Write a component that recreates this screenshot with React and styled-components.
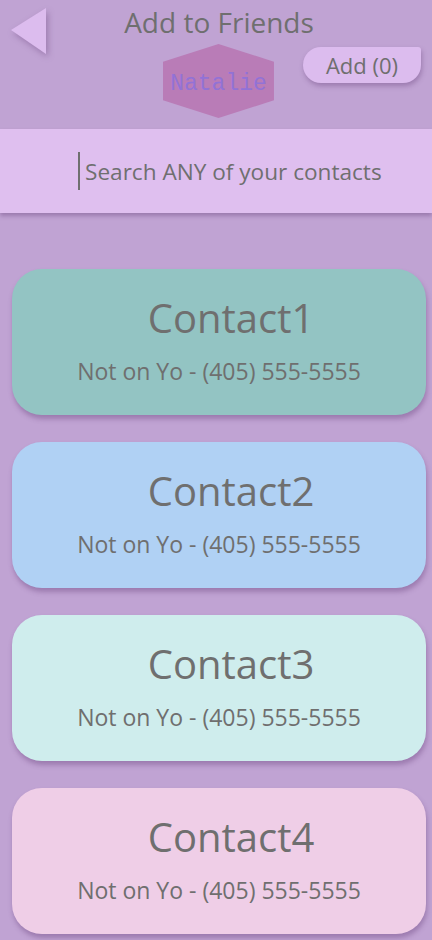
import styled, { createGlobalStyle } from "styled-components"

const GlobalStyle = createGlobalStyle`
    body {
        margin: 0;
        background: #c0a3d3;
        font-family: "Open Sans", "Noto Sans", sans-serif;
        color: #6f6f6f;
    }
`

const contacts = [
    { name: 'Contact1', color: '#93c4c3' },
    { name: 'Contact2', color: '#b0d1f4' },
    { name: 'Contact3', color: '#cfeded' },
    { name: 'Contact4', color: '#efcee7' },
]

const App = () => {
    return (
        <Page>
            <GlobalStyle />
            <Header>
                <BackButton aria-label="back">
                    <svg width="36" height="46" viewBox="0 0 36 46">
                        <polygon points="0,22 35,0 35,46" fill="#dcbcee" />
                    </svg>
                </BackButton>
                <Center>
                    <Title>Add to Friends</Title>
                    <Hexagon>Natalie</Hexagon>
                </Center>
                <AddSide>
                    <AddButton>Add (0)</AddButton>
                </AddSide>
            </Header>
            <SearchBar>
                <Caret />
                <SearchText>Search ANY of your contacts</SearchText>
            </SearchBar>
            <List>
                {contacts.map((c) => (
                    <Card key={c.name} bg={c.color}>
                        <Name>{c.name}</Name>
                        <Sub>Not on Yo - (405) 555-5555</Sub>
                    </Card>
                ))}
            </List>
        </Page>
    )
}

const Page = styled.div`
    width: 432px;
    min-height: 940px;
`
const Header = styled.div`
    display: grid;
    grid-template-columns: minmax(0, 1fr) auto minmax(0, 1fr);
    height: 129px;
`
const BackButton = styled.div`
    padding: 8px 0 0 11px;
    svg {
        filter: drop-shadow(2px 3px 3px rgba(90, 50, 110, 0.35));
    }
`
const Center = styled.div`
    display: flex;
    flex-direction: column;
    align-items: center;
    padding-left: 5px;
`
const Title = styled.div`
    font-size: 28px;
    line-height: 44px;
    padding-left: 1px;
`
const Hexagon = styled.div`
    width: 111px;
    height: 74px;
    box-sizing: border-box;
    padding-top: 5px;
    background: #b97cb7;
    clip-path: polygon(50% 0, 100% 24%, 100% 76%, 50% 100%, 0 76%, 0 24%);
    display: flex;
    align-items: center;
    justify-content: center;
    font-family: "Liberation Mono", monospace;
    font-size: 23px;
    color: #9272d6;
`
const AddSide = styled.div`
    display: flex;
    justify-content: flex-end;
    align-items: flex-start;
    padding: 47px 11px 0 0;
`
const AddButton = styled.div`
    width: 118px;
    height: 36px;
    flex-shrink: 0;
    box-sizing: border-box;
    display: flex;
    align-items: center;
    justify-content: center;
    background: #dcbcee;
    border-radius: 18px 3px 18px 18px;
    font-size: 22px;
    box-shadow: 1px 3px 5px rgba(90, 50, 110, 0.35);
`
const SearchBar = styled.div`
    height: 84px;
    background: #dfbfef;
    display: flex;
    align-items: center;
    padding-left: 78px;
    box-shadow: 0 3px 4px rgba(90, 50, 110, 0.35);
`
const Caret = styled.div`
    width: 2px;
    height: 38px;
    background: #6f6f6f;
    margin-right: 5px;
`
const SearchText = styled.div`
    font-size: 22.6px;
`
const List = styled.div`
    display: flex;
    flex-direction: column;
    gap: 27px;
    padding: 56px 6px 0 12px;
`
const Card = styled.div`
    height: 146px;
    border-radius: 30px;
    background: ${(props) => props.bg};
    box-shadow: 1px 4px 5px rgba(90, 50, 110, 0.35);
    display: flex;
    flex-direction: column;
    align-items: center;
    justify-content: center;
`
const Name = styled.div`
    font-size: 40px;
    line-height: 50px;
    padding-left: 24px;
    margin-top: -4px;
`
const Sub = styled.div`
    font-size: 23px;
    margin-top: 12px;
`

export default App
